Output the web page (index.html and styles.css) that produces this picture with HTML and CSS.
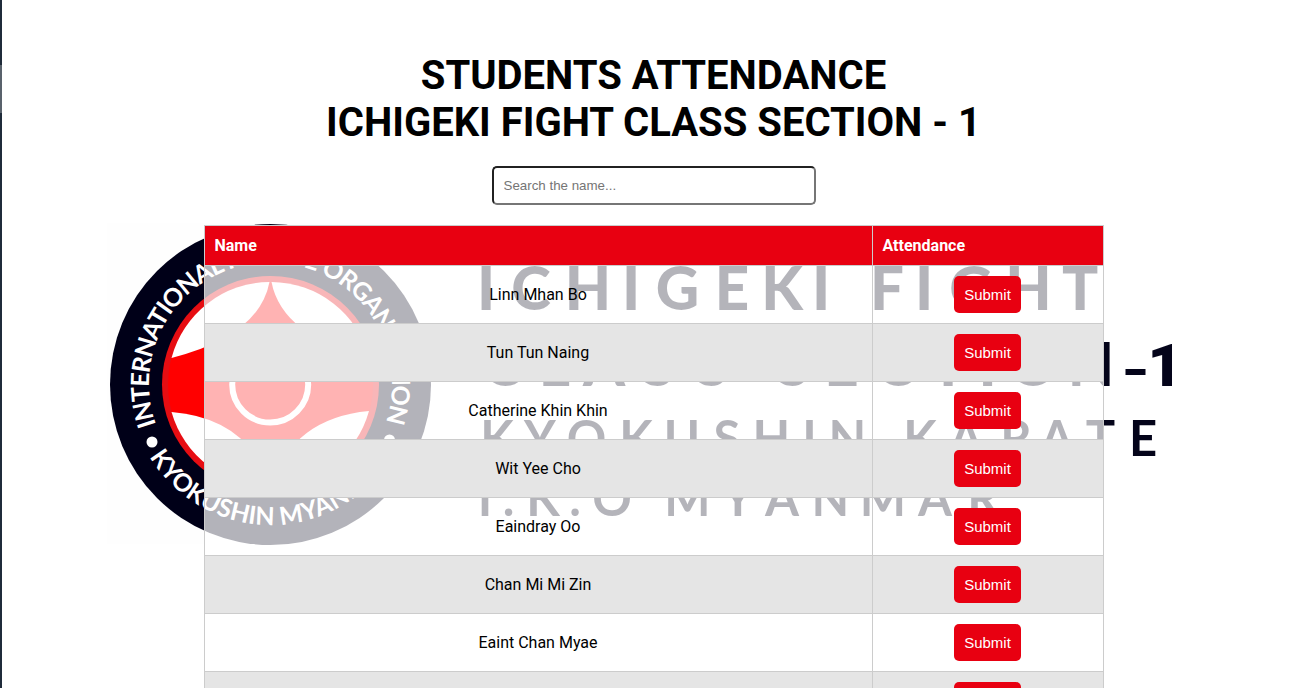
FILE: index.html
```
<!DOCTYPE html>
<html lang="en">
<head>
<meta charset="utf-8">
<title>Students Attendance</title>
<link rel="stylesheet" href="styles.css">
</head>
<body>
<div class="edge"><div class="edge-thumb"></div></div>
<svg class="backdrop" width="1297" height="688" viewBox="0 0 1297 688" aria-hidden="true">
  <defs>
    <path id="arc-top" d="M156 424.6A121.5 121.5 0 1 1 385 424.6"/>
    <path id="arc-bottom" d="M149.6 456.6A141 141 0 0 0 391.4 456.6"/>
  </defs>
  <rect x="107" y="223" width="325" height="321" fill="#fefefe"/>
  <circle cx="270.5" cy="384.500" r="160.5" fill="#000018"/>
  <circle cx="270.5" cy="384.500" r="108.5" fill="#e60d12"/>
  <circle cx="270.5" cy="384.500" r="102.5" fill="#f00"/>
  <g fill="#fff">
    <path d="M269.500 282A102 102 0 0 0 171.500 358Q259 336 269.500 282Z"/>
    <path d="M271.500 282A102 102 0 0 1 369.500 358Q282 336 271.500 282Z"/>
    <path d="M270.500 486A102 102 0 0 1 171.500 412Q248 418 270.500 486Z"/>
    <path d="M270.500 486A102 102 0 0 0 369 411Q293 418 270.500 486Z"/>
    <circle cx="152" cy="442" r="5.500"/>
    <circle cx="389.500" cy="440" r="5.500"/>
  </g>
  <circle cx="270.200" cy="384.500" r="38" fill="none" stroke="#fff" stroke-width="6"/>
  <g class="ring-text">
    <text textLength="462"><textPath href="#arc-top" textLength="462">INTERNATIONAL KARATE ORGANIZATION</textPath></text>
    <text textLength="288"><textPath href="#arc-bottom" textLength="288">KYOKUSHIN MYANMAR</textPath></text>
  </g>
  <g class="banner">
    <text class="large" y="309.500" x="486 531 588 631 677.5 732 782 821 887 924 971 1028.5 1080">ICHIGEKIFIGHT</text>
    <text class="large" y="385.700" x="502 554.5 604 658 712 793 841.5 895 948 987.5 1033 1091">CLASSSECTION</text>
    <rect x="1125.500" y="369" width="20" height="6"/>
    <text class="numeral" y="385.700" x="1165">1</text>
    <text class="small" y="455.800" x="497 540 586.5 636 682 727 771.5 809.5 847.5 920 966 1016 1057 1100.5 1143">KYOKUSHINKARATE</text>
    <text class="small" y="515.700" x="485 508.5 543 575 612 687.5 738 782 830.5 883 935 983">I.K.OMYANMAR</text>
  </g>
</svg>
<main class="page">
  <h1 class="title">STUDENTS ATTENDANCE<br>ICHIGEKI FIGHT CLASS SECTION - 1</h1>
  <input class="search" type="text" placeholder="Search the name...">
  <table class="roster">
    <thead><tr><th class="name-col">Name</th><th>Attendance</th></tr></thead>
    <tbody>
      <tr><td>Linn Mhan Bo</td><td><button class="submit">Submit</button></td></tr>
      <tr><td>Tun Tun Naing</td><td><button class="submit">Submit</button></td></tr>
      <tr><td>Catherine Khin Khin</td><td><button class="submit">Submit</button></td></tr>
      <tr><td>Wit Yee Cho</td><td><button class="submit">Submit</button></td></tr>
      <tr><td>Eaindray Oo</td><td><button class="submit">Submit</button></td></tr>
      <tr><td>Chan Mi Mi Zin</td><td><button class="submit">Submit</button></td></tr>
      <tr><td>Eaint Chan Myae</td><td><button class="submit">Submit</button></td></tr>
      <tr><td>&nbsp;</td><td><button class="submit">Submit</button></td></tr>
    </tbody>
  </table>
</main>
</body>
</html>
```

FILE: styles.css
```
* { box-sizing: border-box; }
body {
  margin: 0;
  height: 688px;
  overflow: hidden;
  display: flex;
  position: relative;
  background: #fff;
  color: #000;
  font-family: Roboto, sans-serif;
  font-size: 16px;
}
.edge {
  flex: none;
  width: 2px;
  height: 688px;
  padding-top: 65px;
  background: #1f2b3a;
}
.edge-thumb { height: 48px; background: #59626c; }
.backdrop { position: absolute; left: 0; top: 0; z-index: -1; }
.ring-text { fill: #fff; font: 700 25px Lato, sans-serif; }
.banner { fill: #04041a; font-family: Lato, sans-serif; text-anchor: middle; }
.large { font-size: 60px; font-weight: 900; }
.numeral { font: 900 60px Roboto, sans-serif; }
.small { font-size: 49px; font-weight: 700; }
.page {
  flex: none;
  width: 1303px;
  padding-top: 52px;
  display: flex;
  flex-direction: column;
  align-items: center;
}
.title {
  margin: 0 0 20px;
  font-size: 40px;
  font-weight: 700;
  line-height: 47px;
  text-align: center;
}
.search {
  width: 324px;
  height: 39px;
  padding: 10px;
  margin-bottom: 20px;
  border: 2px inset #767676;
  border-radius: 5px;
  background: #fff;
  font: 13.333px "Liberation Sans", sans-serif;
}
.roster {
  width: 900px;
  table-layout: fixed;
  border-collapse: collapse;
}
.roster th, .roster td { border: 1px solid #ccc; padding: 10px; }
.roster th {
  height: 40px;
  background: #e80011;
  color: #fff;
  text-align: left;
  font-weight: 700;
}
.name-col { width: 668px; }
.roster td { height: 58px; text-align: center; background: rgba(255, 255, 255, .7); }
.roster tr:nth-child(even) td { background: #e5e5e5; }
.submit {
  display: inline-block;
  vertical-align: middle;
  height: 37px;
  padding: 10px;
  border: 0;
  border-radius: 5px;
  background: #e80011;
  color: #fff;
  font: 15px/17px "Liberation Sans", sans-serif;
}
```
